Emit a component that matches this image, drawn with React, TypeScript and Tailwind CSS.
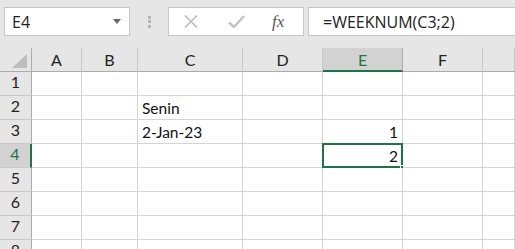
import React from 'react';

const cols = ['A', 'B', 'C', 'D', 'E', 'F', ''];
const widths = ['w-[50px]', 'w-[56px]', 'w-[105px]', 'w-[80px]', 'w-[80px]', 'w-[80px]', 'flex-1'];
const rows = [1, 2, 3, 4, 5, 6, 7, 8];

const data: Record<string, { text: string; right?: boolean }> = {
  'C2': { text: 'Senin' },
  'C3': { text: '2-Jan-23' },
  'E3': { text: '1', right: true },
  'E4': { text: '2', right: true },
};

const cellFont = { fontFamily: 'Lato, "Liberation Sans", sans-serif' };

export default function App() {
  return (
    <div className="w-[515px] h-[249px] overflow-hidden bg-[#e6e6e6] select-none">
      {/* formula bar */}
      <div className="flex items-stretch pt-[7px] h-[36px] pl-[4px]">
        <div className="w-[126px] bg-white border border-[#c6c6c6] flex items-center justify-between pl-[7px] pr-[8px]">
          <span className="text-[16px] text-[#222] leading-none" style={{ fontFamily: '"Open Sans", sans-serif' }}>E4</span>
          <svg width="8" height="5" viewBox="0 0 8 5"><path d="M0 0h8L4 5z" fill="#666" /></svg>
        </div>
        <div className="w-[38px] flex flex-col items-center justify-center gap-[1.5px]">
          <div className="w-[3px] h-[3px] bg-[#b4b4b4]" />
          <div className="w-[3px] h-[3px] bg-[#b4b4b4]" />
          <div className="w-[3px] h-[3px] bg-[#b4b4b4]" />
        </div>
        <div className="w-[136px] bg-white border border-[#c6c6c6] flex items-center pl-[15px]">
          <svg width="14" height="13" viewBox="0 0 14 13" className="mr-[30px]">
            <path d="M1 0.5L13 12.5M13 0.5L1 12.5" stroke="#bcbcbc" strokeWidth="1.6" />
          </svg>
          <svg width="17" height="13" viewBox="0 0 17 13" className="mr-[27px]">
            <path d="M1 7.5L6 12L16 1" stroke="#c4c4c4" strokeWidth="2.6" fill="none" />
          </svg>
          <span className="text-[17px] italic text-[#5a5a5a] leading-none" style={{ fontFamily: '"Liberation Serif", serif' }}>fx</span>
        </div>
        <div className="flex-1 ml-[4px] bg-white border border-r-0 border-[#c6c6c6] flex items-center pl-[14px]">
          <span className="text-[16px] text-[#222] leading-none" style={{ fontFamily: '"Open Sans", sans-serif' }}>=WEEKNUM(C3;2)</span>
        </div>
      </div>

      {/* sheet */}
      <div className="mt-[12px]">
        <div className="flex h-[24px]">
          <div className="w-[32px] border-r border-b border-[#ababab] bg-[#e6e6e6] flex items-end justify-end pr-[4px] pb-[3px]">
            <svg width="15" height="14" viewBox="0 0 15 14"><path d="M15 0V14H0z" fill="#bdbdbd" /></svg>
          </div>
          {cols.map((c, i) => (
            <div
              key={i}
              className={`${widths[i]} flex items-center justify-center text-[16px] text-[#222] ${
                c === 'E'
                  ? 'bg-[#d2d2d2] border-b-2 border-b-[#217346] border-r border-r-[#ababab]'
                  : 'bg-[#e6e6e6] border-b border-b-[#ababab] border-r border-r-[#c8c8c8]'
              }`}
              style={cellFont}
            >
              <span className={c === 'E' ? 'text-[#217346] mt-[1px]' : 'mt-[1px]'}>{c}</span>
            </div>
          ))}
        </div>
        {rows.map((r) => (
          <div key={r} className="flex h-[24px]">
            <div
              className={`w-[32px] flex items-end justify-center pb-[1px] text-[16px] ${
                r === 4
                  ? 'bg-[#d2d2d2] border-r-2 border-r-[#217346] text-[#217346] border-b border-b-[#c8c8c8]'
                  : 'bg-[#e6e6e6] border-r border-r-[#ababab] text-[#222] border-b border-b-[#c8c8c8]'
              }`}
              style={cellFont}
            >
              {r}
            </div>
            {cols.map((c, i) => {
              const key = `${c}${r}`;
              const d = data[key];
              const sel = key === 'E4';
              return (
                <div
                  key={i}
                  className={`${widths[i]} relative bg-white border-r border-b border-[#d4d4d4] flex items-end pb-[1px] px-[4px] text-[15.5px] text-[#111] ${
                    d?.right ? 'justify-end' : 'justify-start'
                  }`}
                  style={cellFont}
                >
                  {d && <span className="leading-[20px]">{d.text}</span>}
                  {sel && (
                    <>
                      <div className="absolute left-[-1px] top-[-1px] right-[-1px] bottom-[-1px] border-2 border-[#217346]" />
                      <div className="absolute right-[-4px] bottom-[-4px] w-[6px] h-[6px] bg-[#217346] border border-white" />
                    </>
                  )}
                </div>
              );
            })}
          </div>
        ))}
      </div>
    </div>
  );
}
